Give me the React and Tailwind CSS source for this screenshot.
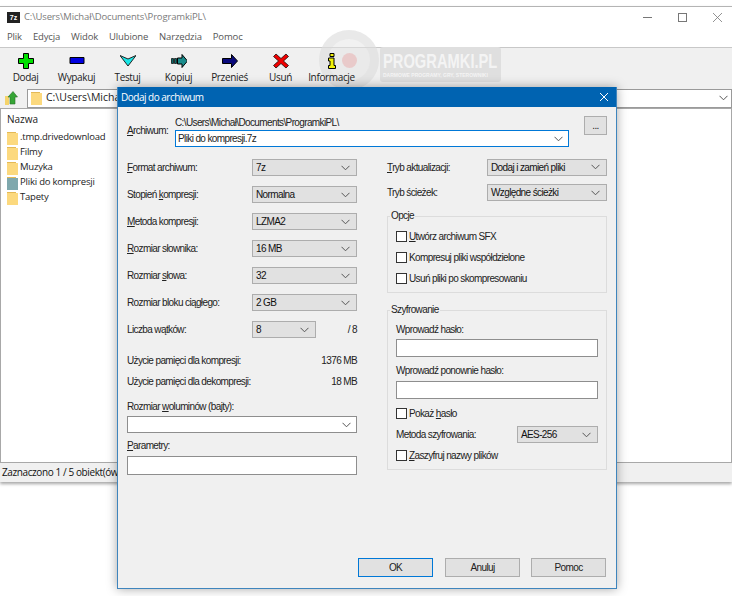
import React from "react";

const Chevron = ({ className = "" }) => (
  <svg width="9" height="6" viewBox="0 0 9 6" className={className}>
    <path d="M0.5 0.8 L4.5 4.8 L8.5 0.8" fill="none" stroke="#555" strokeWidth="1" />
  </svg>
);

const Folder = ({ color = "#fcd97e" }) => (
  <svg width="11" height="14" viewBox="0 0 11 14" className="shrink-0">
    <path d="M0 1 H9 V2 H11 V14 H0 Z" fill={color} />
    <path d="M0 1 H9 V2 H0 Z" fill="#e3b957" />
  </svg>
);

// Pola formularza
const Select = ({ value, className = "w-[105px]" }) => (
  <div className={`${className} h-[17px] bg-[#e1e1e1] border border-[#adadad] flex items-center justify-between pl-[3px] pr-[6px] text-[#111]`}>
    <span>{value}</span>
    <Chevron />
  </div>
);

const Row = ({ label, value, h = "h-[27px]", className }) => (
  <div className={`${h} flex items-center justify-between`}>
    <span>{label}</span>
    <Select value={value} className={className} />
  </div>
);

const TextBox = ({ h = "h-[19px]" }) => <div className={`${h} bg-white border border-[#8e8e8e]`} />;

const Check = ({ children, className = "h-[21px]" }) => (
  <div className={`${className} flex items-center gap-[2px]`}>
    <span className="size-[11px] bg-white border border-[#333] shrink-0" />
    <span>{children}</span>
  </div>
);

const Group = ({ title, className, children }) => (
  <div className={`relative border border-[#dcdcdc] ${className}`}>
    <span className="absolute -top-[7px] left-[2px] bg-[#f0f0f0] px-[1px] leading-[12px]">{title}</span>
    {children}
  </div>
);

const DialogButton = ({ children, primary }) => (
  <div className={`w-[75px] h-[19px] flex items-center justify-center bg-[#e1e1e1] border ${primary ? "border-[#0078d7] border-[1.5px] mr-[1px]" : "border-[#adadad]"}`}>
    {children}
  </div>
);

const icons = [
  ["Dodaj", <path d="M5.5 0.5 H10.5 V5.5 H15.5 V10.5 H10.5 V15.5 H5.5 V10.5 H0.5 V5.5 H5.5 Z" fill="#00e000" stroke="#000" />],
  ["Wypakuj", <path d="M1 4.5 H15 V10.5 H1 Z" fill="#0000e0" stroke="#000" />],
  ["Testuj", <path d="M0 3.5 L8 7 L16 3.5 L8 14 Z" fill="#19e6e6" stroke="#222" transform="translate(0 -1)" />],
  ["Kopiuj", <><path d="M0.5 5.5 H2.5 V10.5 H0.5 Z M3.5 5.5 H5.5 V10.5 H3.5 Z" fill="#0b6b6b" stroke="#000" strokeWidth="0.7" /><path d="M6.5 5 H11 V1.5 L16.5 8 L11 14.5 V11 H6.5 Z" fill="#1a8c8c" stroke="#000" /></>],
  ["Przenieś", <path d="M0.5 5.5 H9.5 V1.5 L15.5 8 L9.5 14.5 V10.5 H0.5 Z" fill="#0a0a7c" stroke="#000" />],
  ["Usuń", <path d="M3 1 L8 5.5 L13 1 L15.5 3.5 L10.5 8 L15.5 12.5 L13 15 L8 10.5 L3 15 L0.5 12.5 L5.5 8 L0.5 3.5 Z" fill="#f00000" stroke="#000" strokeWidth="0.7" />],
  ["Informacje", <path d="M6 0.5 H10 V3.5 H6 Z M4.5 5 H10 V12.5 H11.5 V15.5 H4.5 V12.5 H6 V8 H4.5 Z" fill="#f2f20a" stroke="#000" />],
];

const folders = [
  [".tmp.drivedownload"],
  ["Filmy"],
  ["Muzyka"],
  ["Pliki do kompresji", "#7fa8ad"],
  ["Tapety"],
];

const Dialog = () => (
  <div className="absolute z-20 left-[117px] top-[87px] w-[500px] h-[502px] border border-[#3f85bd] border-t-0 bg-[#f0f0f0] shadow-[0_0_10px_rgba(0,0,0,0.35)] font-['Liberation_Sans',sans-serif] text-[10px] tracking-[-0.62px] text-[#222] flex flex-col">
    <div className="h-[20px] bg-[#0063b1] text-white text-[10px] tracking-[-0.5px] flex items-center justify-between pl-[3px] pr-[7px] font-['Open_Sans',sans-serif] shrink-0">
      <span>Dodaj do archiwum</span>
      <svg width="10" height="10" viewBox="0 0 10 10">
        <path d="M1 1 L9 9 M9 1 L1 9" stroke="#fff" strokeWidth="1" />
      </svg>
    </div>

    <div className="px-[9px] flex-1 flex flex-col">
      {/* Archiwum */}
      <div className="flex h-[41px] pt-[10px]">
        <span className="w-[48px] pt-[6px]"><u>A</u>rchiwum:</span>
        <div className="w-[394px]">
          <div className="h-[13px] leading-[12px]">C:\Users\Michał\Documents\ProgramkiPL\</div>
          <div className="h-[17px] bg-white border border-[#0078d7] flex items-center justify-between pl-[2px] pr-[5px]">
            <span>Pliki do kompresji.7z</span>
            <Chevron />
          </div>
        </div>
        <div className="ml-[15px] w-[23px] h-[19px] -mt-[1px] bg-[#e1e1e1] border border-[#adadad] flex items-center justify-center">...</div>
      </div>

      <div className="flex justify-between pt-[6px]">
        {/* Lewa kolumna */}
        <div className="w-[230px]">
          <Row label={<><u>F</u>ormat archiwum:</>} value="7z" />
          <Row label={<>Stopień <u>k</u>ompresji:</>} value="Normalna" />
          <Row label={<><u>M</u>etoda kompresji:</>} value="LZMA2" />
          <Row label={<><u>R</u>ozmiar słownika:</>} value="16 MB" />
          <Row label={<>Rozmiar <u>s</u>łowa:</>} value="32" />
          <Row label="Rozmiar bloku ciągłego:" value="2 GB" />
          <div className="h-[27px] flex items-center">
            <span className="w-[125px]">Liczba wątków:</span>
            <Select value="8" className="w-[64px]" />
            <span className="ml-auto">/ 8</span>
          </div>
          <div className="h-[21px] mt-[7px] flex items-center justify-between">
            <span>Użycie pamięci dla kompresji:</span>
            <span>1376 MB</span>
          </div>
          <div className="h-[21px] flex items-center justify-between">
            <span>Użycie pamięci dla dekompresji:</span>
            <span>18 MB</span>
          </div>
          <div className="mt-[9px] h-[15px] leading-[12px]">Rozmiar <u>w</u>oluminów (bajty):</div>
          <div className="h-[17px] bg-white border border-[#8e8e8e] flex items-center justify-end pr-[5px]">
            <Chevron />
          </div>
          <div className="mt-[7px] h-[16px] leading-[12px]"><u>P</u>arametry:</div>
          <TextBox />
        </div>

        {/* Prawa kolumna */}
        <div className="w-[220px]">
          <Row label={<><u>T</u>ryb aktualizacji:</>} value="Dodaj i zamień pliki" h="h-[26px]" className="w-[120px]" />
          <Row label="Tryb ścieżek:" value="Względne ścieżki" h="h-[25px]" className="w-[120px]" />
          <Group title="Opcje" className="h-[77px] mt-[11px] px-[8px] pt-[9px]">
            <Check><u>U</u>twórz archiwum SFX</Check>
            <Check>Kompresuj pliki współdzielone</Check>
            <Check>Usuń pliki po skompresowaniu</Check>
          </Group>
          <Group title="Szyfrowanie" className="h-[160px] mt-[17px] px-[8px] pt-[13px]">
            <div className="h-[15px] leading-[12px]">Wprowadź hasło:</div>
            <TextBox h="h-[18px]" />
            <div className="mt-[8px] h-[16px] leading-[12px]">Wprowadź ponownie hasło:</div>
            <TextBox h="h-[18px]" />
            <Check className="h-[21px] mt-[4px]">Pokaż <u>h</u>asło</Check>
            <div className="h-[21px] flex items-center justify-between">
              <span>Metoda szyfrowania:</span>
              <Select value="AES-256" className="w-[81px]" />
            </div>
            <Check><u>Z</u>aszyfruj nazwy plików</Check>
          </Group>
        </div>
      </div>

      <div className="flex-1" />
      <div className="flex justify-end gap-[11px] mb-[11px] pr-[1px]">
        <DialogButton primary>OK</DialogButton>
        <DialogButton>Anuluj</DialogButton>
        <DialogButton>Pomoc</DialogButton>
      </div>
    </div>
  </div>
);

export default function App() {
  return (
    <div className="relative w-[732px] h-[596px] bg-white overflow-hidden font-['Open_Sans',sans-serif] text-[10px] text-[#222]">
      <div className="pt-[6px]">
        <div className="h-[476px] border-t border-[#b4b4b4] shadow-[0_2px_3px_rgba(0,0,0,0.35)] flex flex-col">
          {/* Pasek tytułu */}
          <div className="h-[21px] flex items-center pl-[7px] shrink-0">
            <span className="w-[13px] h-[11px] bg-[#222] text-white text-[7px] leading-[11px] text-center font-bold font-['Liberation_Sans',sans-serif] mr-[4px]">7z</span>
            <span className="text-[#7b7b7b] text-[9.5px] tracking-[-0.15px]">C:\Users\Michał\Documents\ProgramkiPL\</span>
            <div className="ml-auto flex items-center gap-[26px] pr-[10px]">
              <span className="w-[9px] h-px bg-[#777]" />
              <span className="size-[9px] border border-[#777]" />
              <svg width="9" height="9" viewBox="0 0 9 9"><path d="M0 0 L9 9 M9 0 L0 9" stroke="#777" strokeWidth="0.8" /></svg>
            </div>
          </div>
          {/* Menu */}
          <div className="h-[19px] flex items-center pl-[7px] gap-[11px] text-[#555] text-[9.5px] tracking-[-0.15px] shrink-0">
            <span>Plik</span><span>Edycja</span><span>Widok</span><span>Ulubione</span><span>Narzędzia</span><span>Pomoc</span>
          </div>
          {/* Narzędzia */}
          <div className="h-[41px] bg-[#f0f0f0] border-t border-[#c8c8c8] flex shrink-0">
            {icons.map(([name, icon]) => (
              <div key={name} className="relative z-10 w-[51px] flex flex-col items-center pt-[5px]">
                <svg width="16" height="16" viewBox="0 0 16 16">{icon}</svg>
                <span className="mt-[1px] leading-[14px] text-[#222] tracking-[-0.35px]">{name}</span>
              </div>
            ))}
          </div>
          {/* Adres */}
          <div className="h-[20px] bg-[#f0f0f0] flex items-center shrink-0">
            <svg width="14" height="15" viewBox="0 0 14 15" className="ml-[4px] mr-[9px]">
              <path d="M1 5 H5 V14 H1 Z" fill="#f5d36b" />
              <path d="M9 0.5 L13.5 6 H11 V13 H6 V6 H4 Z" fill="#35a535" stroke="#2a702a" strokeWidth="0.6" />
            </svg>
            <div className="flex-1 h-[19px] bg-white border border-[#9a9a9a] flex items-center pl-[3px] pr-[3px] gap-[4px]">
              <Folder />
              <span className="text-[10.5px]">C:\Users\Michał\Documents</span>
              <Chevron className="ml-auto" />
            </div>
          </div>
          {/* Lista plików */}
          <div className="flex-1 bg-white border border-[#a8a8a8] pl-[6px] pt-[3px]">
            <div className="h-[15px] mb-[3px] leading-[14px]">Nazwa</div>
            {folders.map(([name, color]) => (
              <div key={name} className="h-[15px] flex items-center gap-[2px]">
                <Folder color={color} />
                <span className="text-[9.5px] tracking-[-0.2px]">{name}</span>
              </div>
            ))}
          </div>
          {/* Status */}
          <div className="h-[19px] bg-[#f0f0f0] flex items-center pl-[2px] shrink-0 text-[#111] tracking-[-0.4px]">
            Zaznaczono 1 / 5 obiekt(ów)
          </div>
        </div>
      </div>

      {/* Znak wodny */}
      <div className="absolute left-[319px] top-[30px] size-[60px] rounded-full border-[9px] border-[#d8d8d8]/30 bg-[#e4e4e4]/50 flex items-center justify-center">
        <span className="size-[15px] rounded-full bg-[#e89a9a]/40" />
      </div>
      <div className="absolute left-[380px] top-[47px] w-[121px] h-[35px] rounded-[3px] bg-[#dfdfdf] text-[#f4f4f4] font-['Liberation_Sans',sans-serif] font-bold leading-none px-[3px] pt-[3px] overflow-hidden">
        <div className="text-[21px] whitespace-nowrap origin-left scale-x-[0.7]">PROGRAMKI.PL</div>
        <div className="text-[5px] whitespace-nowrap mt-[2px]">DARMOWE PROGRAMY, GRY, STEROWNIKI</div>
      </div>

      <Dialog />
    </div>
  );
}
